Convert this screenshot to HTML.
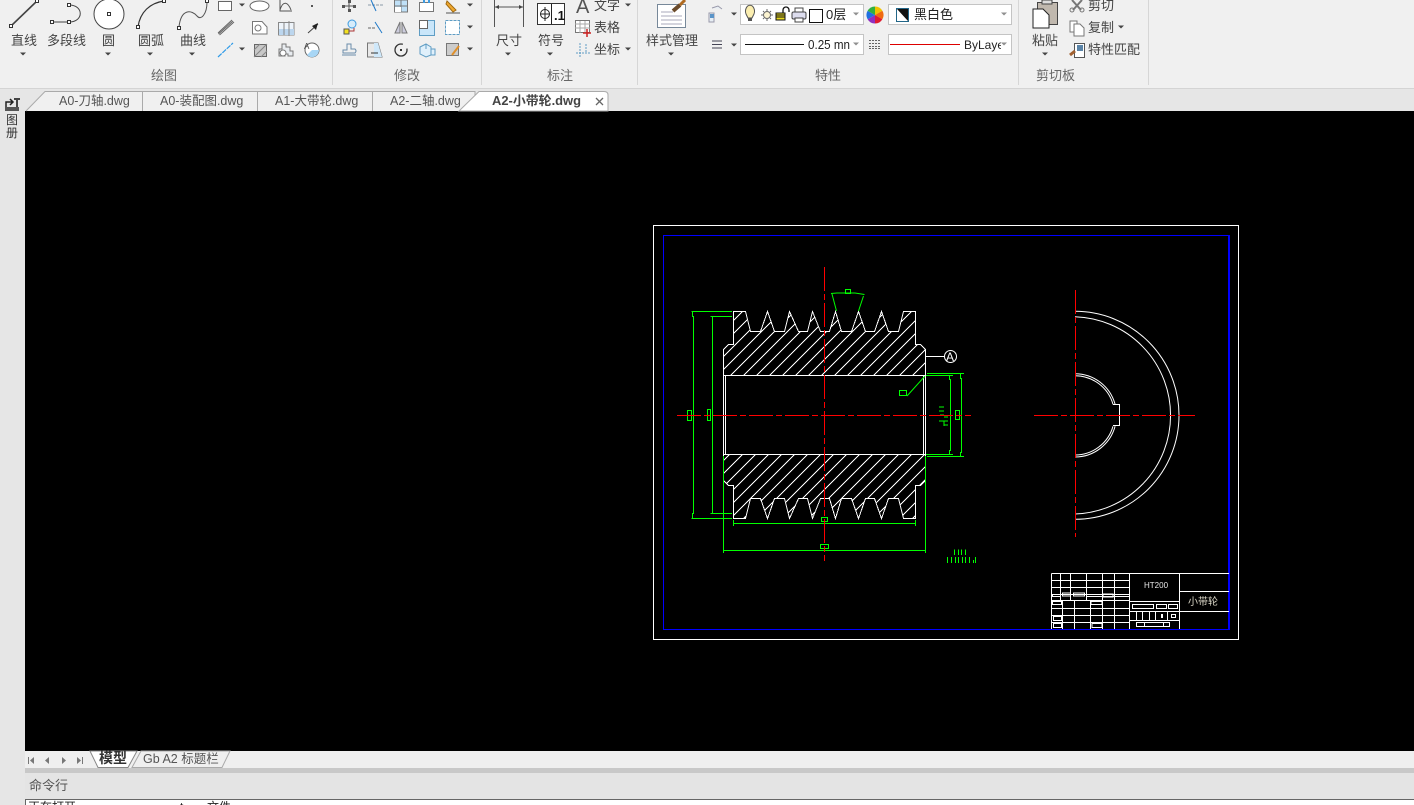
<!DOCTYPE html>
<html lang="zh"><head><meta charset="utf-8"><title>CAD</title>
<style>
html,body{margin:0;padding:0;width:1414px;height:805px;overflow:hidden;background:#f0f0f0}
svg{display:block;position:absolute;left:0;top:0}
text{font-family:"Liberation Sans","Noto Sans CJK SC",sans-serif;fill:#444;font-size:13px}
.c{shape-rendering:crispEdges}
.g{fill:none;stroke:#0f0;stroke-width:1;shape-rendering:crispEdges}
.w{fill:none;stroke:#fff;stroke-width:1;shape-rendering:crispEdges}
.r{fill:none;stroke:#f00;stroke-width:1;stroke-dasharray:24 3 6 3;shape-rendering:crispEdges}
.i{fill:none;stroke:#555;stroke-width:1}
.b{fill:none;stroke:#3d9be0;stroke-width:1}
.h{fill:#fff;stroke:#333;stroke-width:1;shape-rendering:crispEdges}
</style></head><body>
<svg width="1414" height="805" viewBox="0 0 1414 805" xmlns="http://www.w3.org/2000/svg">
<defs>
<polygon id="ar" points="-3,-1.5 3,-1.5 0,1.5" fill="#444"/>
<path id="gear" d="M723.5 375.5V349.5L728.5 344.5H733.5V311.5H745.5L750.5 331.5H760.5L767.5 311.5L774.5 331.5H784.5L789.5 311.5L798.5 331.5H807.5L812.5 311.5L820.5 331.5H829.5L835.5 311.5L841.5 331.5H851.5L858.5 311.5L865.5 331.5H874.5L881.5 311.5L888.5 331.5H898.5L903.5 311.5H915.5V344.5H920.5L925.5 349.5V375.5Z"/>
<clipPath id="gc"><use href="#gear"/><use href="#gear" transform="translate(0 830) scale(1 -1)"/></clipPath>
</defs>

<!-- backgrounds -->
<rect width="1414" height="88" fill="#f0f0f0"/>
<rect y="88" width="1414" height="1" fill="#d4d4d4"/>
<rect y="89" width="1414" height="22" fill="#e6e6e6"/>
<rect y="111" width="25" height="694" fill="#e6e6e6"/>
<rect x="25" y="111" width="1389" height="640" fill="#000"/>
<rect x="25" y="751" width="1389" height="17" fill="#efefef"/>
<rect x="25" y="768" width="1389" height="5" fill="#c8c8c8"/>
<rect x="25" y="773" width="1389" height="26" fill="#e4e4e4"/>
<rect x="25.5" y="799.5" width="1389" height="10" fill="#fff" stroke="#666" class="c"/>

<!-- separators -->
<g fill="#d6d6d6" class="c"><rect x="332" y="0" width="1" height="85"/><rect x="481" y="0" width="1" height="85"/><rect x="637" y="0" width="1" height="85"/><rect x="1018" y="0" width="1" height="85"/><rect x="1148" y="0" width="1" height="85"/></g>

<!-- large draw icons -->
<path d="M11 26L37 1" stroke="#444" stroke-width="1.6" fill="none"/>
<path d="M52 22H69C84 22 84 5 69 5" stroke="#444" fill="none"/>
<circle cx="109" cy="14" r="15" fill="#fff" stroke="#444"/>
<path d="M138 27C140 12 150 3 164 1" stroke="#333" stroke-width="1.2" fill="none"/>
<path d="M179 27C181 8 192 10 197 16C201 21 207 14 207 2" stroke="#555" fill="none"/>
<g class="h"><rect x="9.5" y="24.5" width="3" height="3"/><rect x="35.5" y="-.5" width="3" height="3"/><rect x="50.5" y="20.5" width="3" height="3"/><rect x="67.5" y="20.5" width="3" height="3"/><rect x="67.5" y="3.5" width="3" height="3"/><rect x="107.5" y="12.5" width="3" height="3"/><rect x="136.5" y="25.5" width="3" height="3"/><rect x="162.5" y="-.5" width="3" height="3"/><rect x="177.5" y="26.5" width="3" height="3"/><rect x="205.5" y="-.5" width="3" height="3"/></g>
<text x="11" y="45">直线</text><text x="47" y="45">多段线</text><text x="102" y="45">圆</text><text x="138" y="45">圆弧</text><text x="180" y="45">曲线</text>
<use href="#ar" x="23" y="54"/><use href="#ar" x="108" y="54"/><use href="#ar" x="150" y="54"/><use href="#ar" x="192" y="54"/>

<!-- small draw icons -->
<rect x="218.5" y="1.500" width="13" height="9" fill="#fff" stroke="#666"/>
<use href="#ar" x="242" y="5"/><use href="#ar" x="242" y="49"/><use href="#ar" x="470" y="5"/><use href="#ar" x="470" y="27"/><use href="#ar" x="470" y="49"/>
<ellipse cx="259.5" cy="6" rx="9.5" ry="5" fill="#fff" stroke="#666"/>
<path d="M280 0V11H292M280 10C283 0 288 2 291 10" class="i"/>
<rect x="311" y="5" width="2" height="2" fill="#555"/>
<path d="M218 33L232 20M219.500 35L234 22M218.500 34L233 21" stroke="#666" fill="none"/>
<path d="M252.500 21.500H262L267 27V34H252.500Z" fill="#fff" stroke="#777"/><circle cx="258" cy="28" r="3" fill="none" stroke="#777"/>
<path d="M278.500 22.500H294V35H278.500Z" fill="#eef4fa" stroke="#888"/><rect x="279" y="29" width="15" height="6" fill="#bcd6ee"/><path d="M284 22V35M289 21V36" stroke="#888"/>
<path d="M308 33L318 24" stroke="#444"/><polygon points="312,26 318,23 316,30" fill="#222"/>
<path d="M218 57L233 43" stroke="#2f9be8" stroke-width="1.2" stroke-dasharray="5 1"/>
<rect x="254.500" y="44.500" width="12" height="12" fill="#c8c8c8" stroke="#666"/><path d="M254 57L267 44M254 50L260 44M261 57L267 51" stroke="#888"/>
<path d="M279 49h3v-5h4v3h4v4h3v5h-5v-2h-3v2h-6z" fill="#e8ecf0" stroke="#777"/><circle cx="283" cy="53" r="3" fill="#fff" stroke="#777"/>
<circle cx="312" cy="50" r="7" fill="#fff" stroke="#666"/><path d="M312 50h7a7 7 0 0 1-12 5z" fill="#a8d6f5"/><text x="304" y="49" style="font-size:8px">A</text>

<!-- modify icons -->
<path d="M349 1V11M344 6H354" class="i"/><g fill="#555"><rect x="342" y="5" width="3" height="3"/><rect x="353" y="5" width="3" height="3"/><rect x="348" y="0" width="3" height="3"/><rect x="348" y="9" width="3" height="3"/></g>
<path d="M368 5H383" stroke="#8a9aa8" stroke-dasharray="3 1"/><path d="M371 0L376 11" stroke="#1e78c8"/>
<rect x="394.500" y="0" width="13" height="12" fill="#bfe0f7" stroke="#777"/><path d="M394 6H408M401 0V12" stroke="#777"/><rect x="395" y="7" width="6" height="5" fill="#fff"/>
<rect x="419.500" y="2.500" width="14" height="9" fill="#fff" stroke="#777"/><path d="M424 0V3M429 0V3" stroke="#3d9be0" stroke-width="2"/>
<path d="M447 1L456 10L453 12L446 4Z" fill="#f0a830" stroke="#a06a10"/><path d="M446 13H460" stroke="#555"/>
<rect x="344" y="29" width="5" height="5" fill="#f4e020" stroke="#555"/><circle cx="352" cy="24" r="4" fill="#d6ecfb" stroke="#3d9be0"/><path d="M349 31h5v-3" stroke="#a33" fill="none"/>
<path d="M368 28H376" stroke="#666" stroke-dasharray="3 1"/><path d="M375 22L382 33" stroke="#1e78c8"/>
<path d="M400 22L395 33H400ZM402 22L407 33H402Z" fill="#ccd" stroke="#777"/>
<rect x="419.500" y="20.500" width="15" height="15" fill="#c9e6fa" stroke="#5f9dc4"/><rect x="419.500" y="20.500" width="8" height="8" fill="#fff" stroke="#666"/>
<rect x="445.500" y="20.500" width="14" height="14" fill="#fff" stroke="#5f9dc4" stroke-dasharray="3 1"/>
<path d="M342 55H356M343 50h4v-6h4v5h4q2 2 0 4H343z" fill="none" stroke="#6a8caa"/>
<path d="M367.500 43H378L382 57H367.500Z" fill="#e8e8e8" stroke="#777"/><path d="M378 43L382 57H374V43Z" fill="#cfe8fa"/><path d="M371 53H378" stroke="#333"/>
<circle cx="401" cy="50" r="6" fill="none" stroke="#333" stroke-width="1.3" stroke-dasharray="30 6"/><rect x="400" y="49" width="2" height="2" fill="#333"/>
<path d="M420 47l6-3 5 3v8l-5 2-6-3zM426 44v5M431 49h4v6h-4" fill="#e0f0fb" stroke="#5f9dc4"/>
<rect x="446.500" y="43.500" width="12" height="12" fill="#ccc" stroke="#777"/><path d="M452 55L459 46" stroke="#e0902a" stroke-width="2"/>

<!-- annotation -->
<path d="M494.500 0V27M523.500 0V27M495 7H523" stroke="#555" fill="none" class="c"/><path d="M495 7l4-2v4zM523 7l-4-2v4z" fill="#444"/>
<rect x="537.500" y="3.500" width="27" height="21" fill="#fff" stroke="#333" class="c"/><circle cx="545" cy="14" r="4.500" fill="none" stroke="#222"/><path d="M545 7V21M540 14H550M551.500 4V24" stroke="#222" class="c"/><text x="554" y="20" style="font-weight:bold;font-size:13px;fill:#111">.1</text>
<text x="496" y="45">尺寸</text><text x="538" y="45">符号</text>
<use href="#ar" x="508" y="54"/><use href="#ar" x="550" y="54"/>
<text x="576" y="13" style="font-size:20px;fill:#555">A</text><text x="594" y="10">文字</text><use href="#ar" x="628" y="5"/>
<rect x="575.500" y="20.500" width="14" height="12" fill="#fff" stroke="#777" class="c"/><path d="M575 24H590M575 28H590M580 21V33M585 21V33" stroke="#aaa" class="c"/><path d="M587 29V37M583 33H591" stroke="#c22" stroke-width="1.500"/><text x="594" y="32">表格</text>
<path d="M580 43V57M576 53H590M586 44V53" stroke="#5f9dc4" stroke-dasharray="2 1" fill="none"/><text x="594" y="54">坐标</text><use href="#ar" x="628" y="49"/>
<text x="547" y="80" style="fill:#666">标注</text>

<!-- style -->
<rect x="657.500" y="4.500" width="28" height="23" fill="#fff" stroke="#778899" class="c"/><path d="M661 12H673M661 16H682M661 20H682M661 24H682" stroke="#aab" class="c"/><path d="M673 11L680 5" stroke="#6a4a2a" stroke-width="4"/><path d="M680 5L685 0" stroke="#b06a20" stroke-width="3"/>
<text x="646" y="45">样式管理</text><use href="#ar" x="671" y="54"/>

<!-- properties -->
<path d="M712 8l6-2 4 3M709 13h5v9h-5z" fill="#e8eef4" stroke="#99a"/><rect x="710" y="14" width="4" height="4" fill="#5a94c8"/><use href="#ar" x="734" y="14"/>
<path d="M712 41H722M712 44.500H722M712 48H722" stroke="#445" class="c"/><use href="#ar" x="734" y="45"/>
<g class="c"><rect x="740.500" y="4.500" width="123" height="20" fill="#fff" stroke="#c4c4c4"/><rect x="740.500" y="34.500" width="123" height="20" fill="#fff" stroke="#c4c4c4"/><rect x="888.500" y="4.500" width="123" height="20" fill="#fff" stroke="#c4c4c4"/><rect x="888.500" y="34.500" width="123" height="20" fill="#fff" stroke="#c4c4c4"/></g>
<path d="M746 14a4.500 6 0 1 1 8 0l-2 4h-4z" fill="#fbeeb0" stroke="#555"/><rect x="748" y="18" width="4" height="3" fill="#555"/>
<circle cx="767" cy="15" r="3.500" fill="#fbf3d0" stroke="#666"/><path d="M761 15h2M771 15h2M767 9v2M767 19v2M763 11l1 1M771 11l-1 1M763 19l1-1M771 19l-1-1" stroke="#666"/>
<rect x="776" y="13" width="9" height="7" fill="#e6d820" stroke="#111"/><path d="M776 15H785M776 17H785" stroke="#111"/><path d="M783 13V10a3 3 0 0 1 6 0V12" fill="none" stroke="#111" stroke-width="1.300"/>
<rect x="792" y="12" width="14" height="7" rx="1.500" fill="#dde" stroke="#444"/><rect x="795" y="8" width="8" height="4" fill="#fff" stroke="#444"/><rect x="795" y="18" width="8" height="4" fill="#fff" stroke="#444"/>
<rect x="809.500" y="9.500" width="13" height="13" fill="#fff" stroke="#111" class="c"/>
<text x="826" y="19" style="fill:#222">0层</text><use href="#ar" x="856" y="14" style="opacity:.6"/>
<path d="M875 15V6.500A8.500 8.500 0 0 1 882.400 10.800Z" fill="#f2c200"/><path d="M875 15L882.400 10.800A8.500 8.500 0 0 1 882.400 19.200Z" fill="#f06a10"/><path d="M875 15L882.400 19.200A8.500 8.500 0 0 1 875 23.500Z" fill="#e01c30"/><path d="M875 15V23.500A8.500 8.500 0 0 1 867.600 19.200Z" fill="#9030c0"/><path d="M875 15L867.600 19.200A8.500 8.500 0 0 1 867.600 10.800Z" fill="#2070e0"/><path d="M875 15L867.600 10.800A8.500 8.500 0 0 1 875 6.500Z" fill="#30b040"/>
<rect x="896.500" y="8.500" width="12" height="13" fill="#fff" stroke="#268" class="c"/><polygon points="897,9 908,21 908,9" fill="#111"/>
<text x="914" y="19" style="fill:#222">黑白色</text><use href="#ar" x="1004" y="14" style="opacity:.6"/>
<rect x="745" y="44" width="59" height="1" fill="#111"/>
<text x="808" y="49" textLength="42" lengthAdjust="spacingAndGlyphs" style="fill:#222">0.25 mn</text><use href="#ar" x="856" y="44" style="opacity:.6"/>
<path d="M869 40.500H881M869 43.500H881M869 46.500H881M869 48.500H881" stroke="#666" stroke-dasharray="2 1" class="c"/>
<rect x="890" y="44" width="70" height="1" fill="#d00"/>
<svg x="964" y="34" width="37" height="22"><text x="0" y="15" style="fill:#222;font-size:12px">ByLayer</text></svg>
<use href="#ar" x="1004" y="44" style="opacity:.6"/>
<text x="815" y="80" style="fill:#666">特性</text>

<!-- clipboard -->
<rect x="1037.500" y="2.500" width="20" height="22" fill="#c0b8ae" stroke="#444" class="c"/><path d="M1042 0H1052V4H1042Z" fill="#ddd" stroke="#444"/>
<path d="M1033 9H1043L1049 15V28H1033Z" fill="#fff" stroke="#222"/>
<text x="1032" y="45">粘贴</text><use href="#ar" x="1045" y="54"/>
<path d="M1072 0L1081 10M1082 0L1073 10" stroke="#777" stroke-width="2"/><circle cx="1072" cy="10" r="2" fill="none" stroke="#777"/><circle cx="1082" cy="10" r="2" fill="none" stroke="#777"/>
<text x="1088" y="10">剪切</text>
<path d="M1070 21H1077V32H1070Z" fill="#fff" stroke="#777"/><path d="M1074 24H1080L1084 28V36H1074Z" fill="#fff" stroke="#777"/>
<text x="1088" y="32">复制</text><use href="#ar" x="1121" y="27"/>
<rect x="1074.500" y="43.500" width="10" height="14" fill="#fff" stroke="#555" class="c"/><rect x="1077" y="45" width="6" height="6" fill="#5a84a8"/><path d="M1070 55L1075 51" stroke="#a06030" stroke-width="3"/>
<text x="1088" y="54">特性匹配</text>
<text x="1036" y="80" style="fill:#666">剪切板</text>

<text x="151" y="80" style="fill:#666">绘图</text><text x="394" y="80" style="fill:#666">修改</text>

<!-- side toolbar -->
<path d="M6 107V102H12M10 99l3 3-3 3" fill="none" stroke="#222" stroke-width="1.500"/><path d="M14 99H20M17 99V107" stroke="#444" stroke-width="2"/><rect x="5" y="107" width="14" height="4" fill="#555"/>
<text x="6" y="124" style="font-size:12px;fill:#333">图</text><text x="6" y="137" style="font-size:12px;fill:#333">册</text>

<!-- file tabs -->
<g stroke="#aaa" fill="#f0f0f0">
<path d="M26 111L45 91.500H142.500V111"/><path d="M142.500 111V91.500H257.500V111"/><path d="M257.500 111V91.500H372.500V111"/><path d="M372.500 111V91.500H475V111"/>
</g>
<path d="M459 111L479 91.500H604Q608 91.500 608 95V111Z" fill="#fff" stroke="#aaa"/>
<text x="59" y="105" style="font-size:12.500px;fill:#555">A0-刀轴.dwg</text>
<text x="160" y="105" style="font-size:12.500px;fill:#555">A0-装配图.dwg</text>
<text x="275" y="105" style="font-size:12.500px;fill:#555">A1-大带轮.dwg</text>
<text x="390" y="105" style="font-size:12.500px;fill:#555">A2-二轴.dwg</text>
<text x="492" y="105" textLength="89" lengthAdjust="spacingAndGlyphs" style="font-size:12.500px;font-weight:bold;fill:#444">A2-小带轮.dwg</text>
<path d="M596 98L603 105M603 98L596 105" stroke="#666" stroke-width="1.300"/>

<!-- drawing frames -->
<rect x="653.500" y="225.500" width="585" height="414" class="w"/>
<path d="M663.500 629.500V235.500H1228.500V629.500H663.500Z" fill="none" stroke="#00f" class="c"/>
<rect x="1228" y="235" width="2" height="395" fill="#00f"/>

<!-- gear section -->
<g clip-path="url(#gc)"><path class="w" d="M720 308l-214 214M733 308l-214 214M746 308l-214 214M759 308l-214 214M772 308l-214 214M785 308l-214 214M798 308l-214 214M811 308l-214 214M824 308l-214 214M837 308l-214 214M850 308l-214 214M863 308l-214 214M876 308l-214 214M889 308l-214 214M902 308l-214 214M915 308l-214 214M928 308l-214 214M941 308l-214 214M954 308l-214 214M967 308l-214 214M980 308l-214 214M993 308l-214 214M1006 308l-214 214M1019 308l-214 214M1032 308l-214 214M1045 308l-214 214M1058 308l-214 214M1071 308l-214 214M1084 308l-214 214M1097 308l-214 214M1110 308l-214 214M1123 308l-214 214M1136 308l-214 214M1149 308l-214 214"/></g>
<use href="#gear" class="w"/>
<use href="#gear" class="w" transform="translate(0 830) scale(1 -1)"/>
<path d="M723.500 375.500V454.500M725.500 375.500V454.500M923.500 375.500V454.500M925.500 375.500V454.500M723.500 375.500H925.500M723.500 454.500H925.500" class="w"/>

<!-- green dims -->
<path class="g" d="M691.500 311.500H732M692.500 311.500V316.500H693.500V513.500H692.500V518.500M691.500 518.500H732M710.500 316.500H732M712.500 316.500V513.500M710.500 513.500H732"/>
<path class="g" d="M927 373.500H964M926 375.500H953M949.500 375.500V379.500H950.500V450.500H949.500V454.500M926 454.500H953M927 456.500H964M960.500 373.500V378.500H961.500V452.500H960.500V456.500"/>
<path class="g" d="M733.500 520V526M915.500 520V526M733.500 523.500H915.500M723.500 456V553M925.500 456V553M723.500 550.500H925.500"/>
<path class="g" d="M687.500 410.500h4v10h-4zM707.500 409.500h3v11h-3zM955.500 410.500h4v9h-4zM821.500 517.500h6v4h-6zM820.500 544.500h8v4h-8zM899.500 390.500h7v5h-7zM845.500 289.500h5v4h-5z"/>
<path d="M907 396L925 376" stroke="#0f0" fill="none"/>
<path class="g" d="M939 407H944M939 411H944M940 415H944M944 417H948M939 421H948M944 425H948M944 421V426"/>
<path d="M831 293.500L837 293H855L864.500 294.500M832 294L836.500 311M863.500 296L858.500 311" stroke="#0f0" fill="none"/>
<path class="g" d="M954.500 549.500V555M958.500 549.500V555M961.500 549.500V555M965.500 549.500V555M947.500 557V563M951.500 557V563M955.500 557V563M958.500 557V563M962.500 557V563M965.500 557V563M969.500 557V563M973.500 560V563M975.500 557V563"/>

<!-- A callout -->
<path d="M926 356.500H944" class="w"/>
<circle cx="950.500" cy="356.500" r="6" fill="none" stroke="#fff"/>
<text x="946" y="361" style="font-size:12px;fill:#fff">A</text>

<!-- right view -->
<path d="M1075 311.300A104 104 0 0 1 1075 519.300M1075 316.700A98.700 98.700 0 0 1 1075 514" fill="none" stroke="#fff"/>
<path d="M1075 373.700A41.600 41.600 0 0 1 1115.100 404.300M1075 375.700A39.600 39.600 0 0 1 1113 404.300M1113 404.500H1119.500V425.500H1113M1113 426.300A39.600 39.600 0 0 1 1075 455M1115.100 426.300A41.600 41.600 0 0 1 1075 457" fill="none" stroke="#fff"/>

<!-- center lines -->
<path d="M824.500 267V561" class="r"/>
<path d="M677 415.500H971" class="r"/>
<path d="M1034 415.500H1195" class="r"/>
<path d="M1075.500 290V537" class="r"/>

<!-- title block -->
<path class="w" d="M1051.500 573.500H1229M1051.500 573.500V629M1060.500 573.500V600.500M1070.500 573.500V600.500M1086.500 573.500V600.500M1102.500 573.500V629M1114.500 573.500V629M1129.500 573.500V629M1179.500 573.500V629M1051.500 580.500H1129.500M1051.500 587.500H1129.500M1051.500 594.500H1129.500M1086.500 596.500H1129.500M1051.500 600.500H1129.500M1129.500 601.500H1179.500M1179.500 591.500H1229M1179.500 611.500H1229M1129.500 611.500H1179.500M1129.500 620.500H1179.500M1051.500 608.500H1129.500M1051.500 615.500H1129.500M1051.500 622.500H1129.500M1062.500 600.500V629M1074.500 600.500V629M1090.500 600.500V629"/>
<path class="w" d="M1052.500 596.500h8v-2h-8zM1062.500 596h8v-3h-8zM1073.500 596h11v-3h-11zM1103 597h10v-3h-10zM1052.500 604.500h9v-3h-9zM1091 604.500h11v-3h-11zM1053.500 620.500h8v-4h-8zM1053.500 627.500h8v-4h-8zM1092 627.500h10v-4h-10zM1132.500 604.500h21v4h-21zM1156.500 604.500h10v4h-10zM1168.500 604.500h9v4h-9zM1136.500 611.500V620.500M1142.500 611.500V620.500M1149.500 611.500V620.500M1155.500 611.500V620.500M1167.500 611.500V620.500M1171.500 614.500h4v3h-4zM1161.500 614.500h1v3h-1zM1136.500 622.500h33v4h-33zM1144.500 622.500V626.500M1163.500 622.500V626.500"/>
<text x="1144" y="588" style="font-size:8px;fill:#e8e8e8">HT200</text>
<text x="1188" y="605" style="font-size:10px;fill:#dcd8c8">小带轮</text>

<!-- bottom bar -->
<g fill="#777"><rect x="28" y="757" width="1" height="7"/><polygon points="34,757 34,764 30,760.500"/><polygon points="49,757 49,764 45,760.500"/><polygon points="62,757 62,764 66,760.500"/><polygon points="77,757 77,764 81,760.500"/><rect x="82" y="757" width="1" height="7"/></g>
<path d="M132 767.500L141 751H230L222 767.500Z" fill="#efefef" stroke="#aaa"/>
<path d="M90 751L98 767.500H128L137 751Z" fill="#fff" stroke="#888"/>
<text x="99" y="763" style="font-size:14px;font-weight:bold;fill:#333">模型</text>
<text x="143" y="763" style="font-size:12.500px;fill:#555">Gb A2 标题栏</text>
<text x="29" y="790" style="fill:#555">命令行</text>
<text x="28" y="811" style="font-size:12px;fill:#222">正在打开</text>
<text x="180" y="811" style="font-size:12px;fill:#222">t</text>
<text x="207" y="811" style="font-size:12px;fill:#222">文件</text>
</svg>
</body></html>
